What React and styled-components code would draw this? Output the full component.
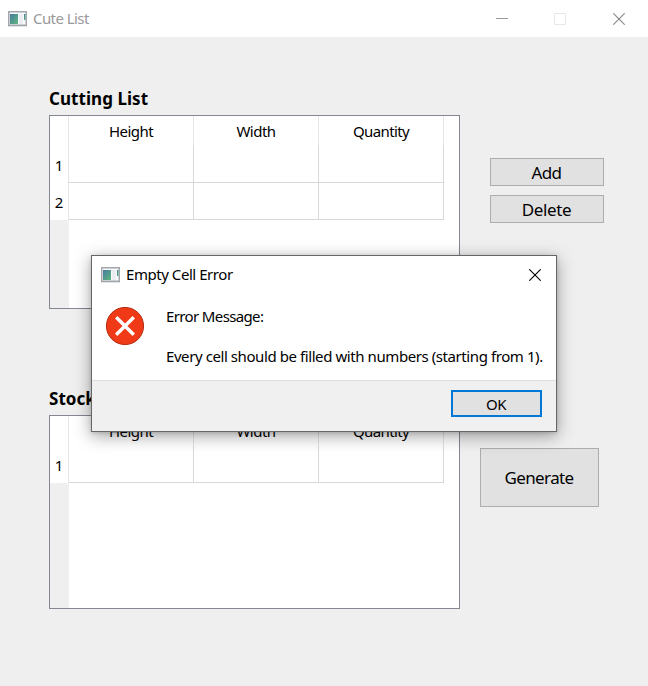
import React from "react";
import styled, { createGlobalStyle } from "styled-components";

const Global = createGlobalStyle`
  * { box-sizing: border-box; }
  body { margin: 0; overflow: hidden; font-family: "Noto Sans", "Open Sans", sans-serif; color: #000; }
`;

const Window = styled.div`
  position: relative;
  width: 648px;
  height: 686px;
  background: #efefef;
`;

const TitleBar = styled.header`
  display: flex;
  align-items: center;
  height: ${(p) => p.$height}px;
  padding-left: ${(p) => p.$inset}px;
  background: #fff;
  color: ${(p) => p.$color};
`;

const Label = styled.span`
  display: block;
  white-space: nowrap;
  padding-bottom: 2px;
  font-size: ${(p) => p.$size || 15}px;
  line-height: 18px;
  font-weight: ${(p) => (p.$bold ? 700 : 400)};
  letter-spacing: ${(p) => p.$track || 0}px;
`;

const WindowIcon = styled.svg`
  display: block;
  flex: none;
  margin-right: 6px;
`;

const Controls = styled.div`
  display: flex;
  gap: 46px;
  margin-left: auto;
  padding-right: ${(p) => p.$right}px;

  & > :last-child { margin-left: 1px; }
`;

const Glyph = styled.svg`
  display: block;
`;

const Content = styled.main`
  display: flex;
  flex-direction: column;
  padding: 51px 0 0 49px;
`;

const Section = styled.section`
  display: flex;
  height: 300px;
`;

const TableGroup = styled.div`
  width: 411px;
`;

const Heading = styled.h2`
  margin: 0;
  height: 27px;
  padding-top: 2px;
`;

const Table = styled.div`
  display: grid;
  grid-template-columns: 19px 1fr;
  height: 194px;
  border: 1px solid #828790;
  background: #fff;
`;

const RowHeaders = styled.div`
  display: flex;
  flex-direction: column;
  padding-top: 30px;
  background: linear-gradient(#fff 0 ${(p) => 30 + p.$rows * 37}px, #efefef 0);
`;

const RowNumber = styled.div`
  display: flex;
  justify-content: center;
  height: 37px;
  padding: 10px 1px 0 0;
`;

const Cells = styled.div`
  display: grid;
  grid-template-columns: repeat(3, 125px);
  grid-template-rows: 30px;
  grid-auto-rows: 37px;
  align-content: start;
  width: 376px;
  height: ${(p) => 30 + p.$rows * 37}px;
  margin-left: -1px;
  border-left: 1px solid #e5e5e5;
`;

const ColumnHeader = styled.div`
  display: flex;
  justify-content: center;
  padding-top: 6px;
  border-right: 1px solid #e5e5e5;
`;

const Cell = styled.div`
  border-right: 1px solid #d8d8d8;
  border-bottom: 1px solid #d8d8d8;
`;

const Actions = styled.div`
  display: flex;
  flex-direction: column;
  gap: 9px;
  margin: ${(p) => p.$top}px 0 0 ${(p) => p.$left}px;
`;

const Button = styled.button`
  display: flex;
  align-items: center;
  justify-content: center;
  width: ${(p) => p.$w}px;
  height: ${(p) => p.$h}px;
  padding: 3px 1px 0 0;
  border: ${(p) => (p.$focus ? "2px solid #0078d7" : "1px solid #adadad")};
  background: #e1e1e1;
  color: #000;
  font-family: inherit;
`;

const Dialog = styled.div`
  position: absolute;
  left: 91px;
  top: 255px;
  width: 466px;
  height: 177px;
  border: 1px solid #666;
  background: #fff;
  box-shadow: 0 4px 16px rgba(0, 0, 0, 0.36), 0 1px 4px rgba(0, 0, 0, 0.14);
`;

const Message = styled.div`
  display: flex;
  gap: 21px;
  height: 87px;
  padding: 13px 0 0 13px;
`;

const MessageText = styled.div`
  display: flex;
  flex-direction: column;
  gap: 20px;
  padding-top: 1px;
`;

const Footer = styled.footer`
  display: flex;
  justify-content: flex-end;
  height: 51px;
  padding: 9px 14px 0 0;
  border-top: 1px solid #dfdfdf;
  background: #f0f0f0;
`;

const AppIcon = () => (
  <WindowIcon width="19" height="16" viewBox="0 0 19 16">
    <defs>
      <linearGradient id="pane" x1="0" y1="0" x2="1" y2="1">
        <stop offset="0" stopColor="#4679a0" />
        <stop offset="1" stopColor="#5fb77d" />
      </linearGradient>
    </defs>
    <rect x="0.75" y="0.75" width="17.5" height="13.5" fill="#f8f9fa" stroke="#a3a7ac" strokeWidth="1.5" />
    <path d="M0 15.5h19" stroke="#e2e3e4" />
    <rect x="2" y="3" width="8" height="10" fill="url(#pane)" />
    <rect x="11" y="3" width="4" height="10" fill="#ebedf0" />
    <rect x="16" y="3" width="1.5" height="6" fill="url(#pane)" />
  </WindowIcon>
);

const Cross = ({ color }) => (
  <Glyph width="12" height="12" viewBox="0 0 12 12">
    <path d="M.3.3l11.4 11.4M11.7.3L.3 11.7" stroke={color} strokeWidth="1.1" />
  </Glyph>
);

const ErrorIcon = () => (
  <Glyph width="40" height="40" viewBox="0 0 40 40">
    <circle cx="20" cy="20" r="18.6" fill="#f03a17" stroke="#b52c14" strokeWidth="1" />
    <path d="M11.2 11.2l17.6 17.6M28.8 11.2L11.2 28.8" stroke="#fff" strokeWidth="3.4" />
  </Glyph>
);

const columns = [
  { name: "Height", track: -0.55 },
  { name: "Width", track: -0.5 },
  { name: "Quantity", track: -0.6 },
];

const DataTable = ({ title, rows }) => (
  <TableGroup>
    <Heading><Label $size={17} $bold $track={0.05}>{title}</Label></Heading>
    <Table>
      <RowHeaders $rows={rows}>
        {Array.from({ length: rows }, (_, i) => (
          <RowNumber key={i}><Label>{i + 1}</Label></RowNumber>
        ))}
      </RowHeaders>
      <Cells $rows={rows}>
        {columns.map((c) => (
          <ColumnHeader key={c.name}><Label $track={c.track}>{c.name}</Label></ColumnHeader>
        ))}
        {Array.from({ length: rows * 3 }, (_, i) => <Cell key={i} />)}
      </Cells>
    </Table>
  </TableGroup>
);

export default function App() {
  return (
    <Window>
      <Global />
      <TitleBar $height={37} $inset={8} $color="#999">
        <AppIcon />
        <Label $track={-0.57}>Cute List</Label>
        <Controls $right={23}>
          <Glyph width="12" height="12"><path d="M0 5.5h12" stroke="#999" /></Glyph>
          <Glyph width="12" height="12"><rect x=".5" y=".5" width="11" height="11" fill="none" stroke="#e8e8e8" /></Glyph>
          <Cross color="#888" />
        </Controls>
      </TitleBar>
      <Content>
        <Section>
          <DataTable title="Cutting List" rows={2} />
          <Actions $left={30} $top={70}>
            <Button $w={114} $h={28}><Label $size={17} $track={-0.6}>Add</Label></Button>
            <Button $w={114} $h={28}><Label $size={17} $track={-0.4}>Delete</Label></Button>
          </Actions>
        </Section>
        <Section>
          <DataTable title="Stock List" rows={1} />
          <Actions $left={20} $top={60}>
            <Button $w={119} $h={59}><Label $size={17} $track={-0.6}>Generate</Label></Button>
          </Actions>
        </Section>
      </Content>
      <Dialog role="dialog" aria-label="Empty Cell Error">
        <TitleBar $height={37} $inset={9} $color="#000">
          <AppIcon />
          <Label $track={-0.45}>Empty Cell Error</Label>
          <Controls $right={15}><Cross color="#000" /></Controls>
        </TitleBar>
        <Message>
          <ErrorIcon />
          <MessageText>
            <Label $track={-0.63}>Error Message:</Label>
            <Label $track={-0.42}>Every cell should be filled with numbers (starting from 1).</Label>
          </MessageText>
        </Message>
        <Footer>
          <Button $w={91} $h={27} $focus><Label $track={-0.5}>OK</Label></Button>
        </Footer>
      </Dialog>
    </Window>
  );
}
